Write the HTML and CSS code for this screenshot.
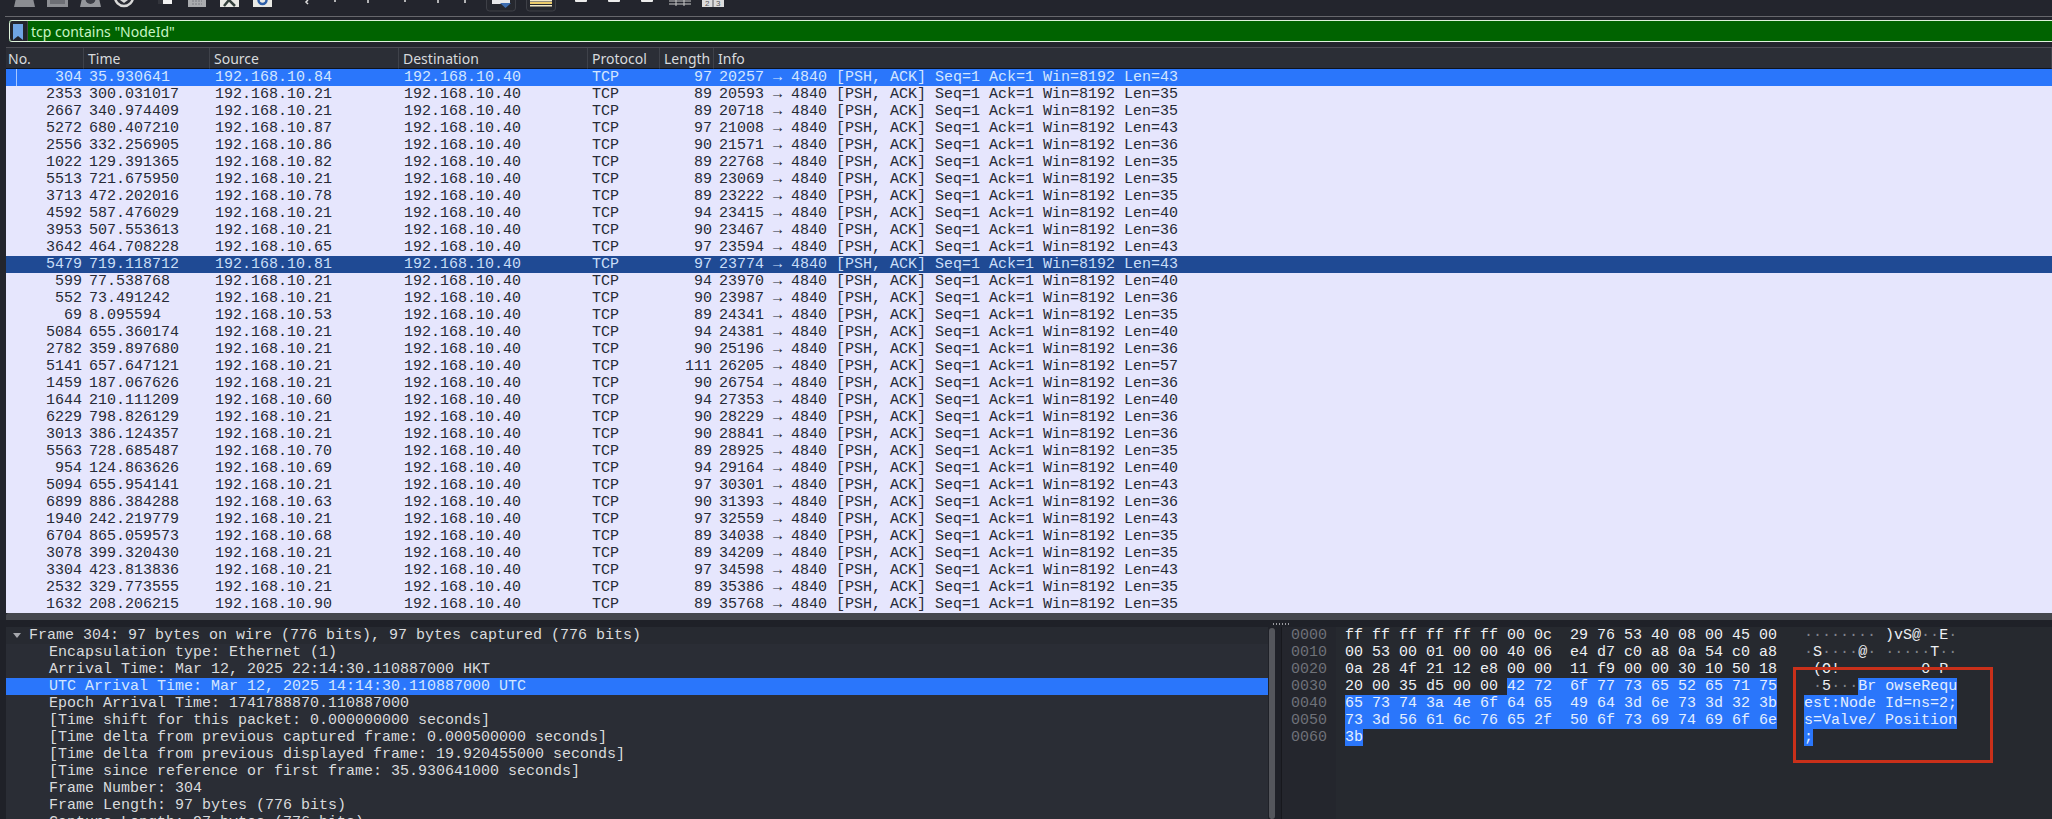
FILE: index.html
```html
<!DOCTYPE html>
<html lang="en">
<head>
    <meta charset="UTF-8">
    <meta name="viewport" content="width=device-width, initial-scale=1.0">
    <title>Wireshark</title>
    <link rel="stylesheet" href="styles.css">
</head>
<body>

    <div class="app">
        <!-- main toolbar, only the lower edge of the icons is in the shot -->
        <div class="toolbar">
            <svg class="toolbar-icons" width="800" height="16" viewBox="0 0 800 16">
                <path d="M17 -6H32L35 7H14Z" fill="#8b8d92"/>
                <rect x="47" y="-8" width="21" height="15" fill="#8d8f94"/>
                <rect x="50" y="-8" width="15" height="12" fill="#6d6f75"/>
                <path d="M83 -6H98L101 7H80Z" fill="#94969b"/>
                <circle cx="90.500" cy="-1" r="5" fill="#3b3d45"/>
                <circle cx="124" cy="-3" r="9" fill="#2b2d35" stroke="#d9d9d9" stroke-width="2.500"/>
                <path d="M120 0H128L124 3Z" fill="#d9d9d9"/>
                <rect x="158" y="-4" width="14" height="8" fill="#f2f2f2"/>
                <rect x="158" y="0" width="5" height="4" fill="#33353c"/>
                <rect x="188" y="-6" width="18" height="13" fill="#a9abae"/>
                <path d="M192 1H202M192 4H202" stroke="#7b7d82" stroke-dasharray="2 1"/>
                <rect x="220" y="-6" width="19" height="13" fill="#e9e9e4"/>
                <path d="M224 6L229 0L235 6" fill="none" stroke="#34403c" stroke-width="2.500"/>
                <rect x="253" y="-6" width="19" height="13" fill="#e9e9e4"/>
                <circle cx="262.500" cy="0" r="4" fill="none" stroke="#2e5fa8" stroke-width="2.500"/>
                <path d="M308 0L306 2L308 4M335 0V2M368 0V3M405 0V2M438 0V3M465 0V3" fill="none" stroke="#e2e2e2" stroke-width="1.500"/>
                <rect x="486.500" y="-6" width="29" height="17" rx="3" fill="#26282f" stroke="#3e4047"/>
                <rect x="492" y="-2" width="18" height="6" fill="#e8e8ea"/>
                <path d="M500 3H511L505.500 8Z" fill="#3e6db0"/>
                <rect x="526.500" y="-6" width="29" height="17" rx="3" fill="#26282f" stroke="#3e4047"/>
                <rect x="530" y="0" width="22" height="1.500" fill="#f3e9c8"/>
                <rect x="530" y="2" width="22" height="2" fill="#eccb6a"/>
                <rect x="530" y="5" width="22" height="1.500" fill="#f3e9c8"/>
                <rect x="575" y="-3" width="12" height="5" rx="1" fill="#ececec"/>
                <rect x="608" y="-3" width="12" height="5" rx="1" fill="#ececec"/>
                <rect x="641" y="-3" width="12" height="5" rx="1" fill="#ececec"/>
                <path d="M669 1H691M669 4H691M676 -2V6M684 -2V6" stroke="#c9c9c9"/>
                <rect x="702" y="-6" width="22" height="13" fill="#dcdcdc"/>
                <path d="M713 -6V7" stroke="#55575d"/>
                <text x="705" y="6" class="tool-digit">2</text>
                <text x="716" y="6" class="tool-digit">3</text>
            </svg>
        </div>

        <!-- display filter -->
        <div class="filter">
            <div class="filter-mark">
                <svg width="10" height="16" viewBox="0 0 10 16">
                    <path d="M0 0H10V16L5 12L0 16Z" fill="#6fa5e4"/>
                </svg>
            </div>
            <span class="filter-text">tcp contains "NodeId"</span>
        </div>

        <!-- packet list -->
        <div class="packets">
            <table class="packet-table">
                <colgroup>
                    <col class="col-no"><col class="col-time"><col class="col-addr"><col class="col-addr"><col class="col-proto"><col class="col-len"><col>
                </colgroup>
                <thead>
                    <tr>
                        <th class="th-no">No.</th><th>Time</th><th>Source</th><th>Destination</th><th>Protocol</th><th>Length</th><th>Info</th>
                    </tr>
                </thead>
                <tbody>
                    <tr class="current"><td class="num first-mark">304</td><td>35.930641</td><td>192.168.10.84</td><td>192.168.10.40</td><td>TCP</td><td class="num">97</td><td>20257 → 4840 [PSH, ACK] Seq=1 Ack=1 Win=8192 Len=43</td></tr>
                    <tr><td class="num">2353</td><td>300.031017</td><td>192.168.10.21</td><td>192.168.10.40</td><td>TCP</td><td class="num">89</td><td>20593 → 4840 [PSH, ACK] Seq=1 Ack=1 Win=8192 Len=35</td></tr>
                    <tr><td class="num">2667</td><td>340.974409</td><td>192.168.10.21</td><td>192.168.10.40</td><td>TCP</td><td class="num">89</td><td>20718 → 4840 [PSH, ACK] Seq=1 Ack=1 Win=8192 Len=35</td></tr>
                    <tr><td class="num">5272</td><td>680.407210</td><td>192.168.10.87</td><td>192.168.10.40</td><td>TCP</td><td class="num">97</td><td>21008 → 4840 [PSH, ACK] Seq=1 Ack=1 Win=8192 Len=43</td></tr>
                    <tr><td class="num">2556</td><td>332.256905</td><td>192.168.10.86</td><td>192.168.10.40</td><td>TCP</td><td class="num">90</td><td>21571 → 4840 [PSH, ACK] Seq=1 Ack=1 Win=8192 Len=36</td></tr>
                    <tr><td class="num">1022</td><td>129.391365</td><td>192.168.10.82</td><td>192.168.10.40</td><td>TCP</td><td class="num">89</td><td>22768 → 4840 [PSH, ACK] Seq=1 Ack=1 Win=8192 Len=35</td></tr>
                    <tr><td class="num">5513</td><td>721.675950</td><td>192.168.10.21</td><td>192.168.10.40</td><td>TCP</td><td class="num">89</td><td>23069 → 4840 [PSH, ACK] Seq=1 Ack=1 Win=8192 Len=35</td></tr>
                    <tr><td class="num">3713</td><td>472.202016</td><td>192.168.10.78</td><td>192.168.10.40</td><td>TCP</td><td class="num">89</td><td>23222 → 4840 [PSH, ACK] Seq=1 Ack=1 Win=8192 Len=35</td></tr>
                    <tr><td class="num">4592</td><td>587.476029</td><td>192.168.10.21</td><td>192.168.10.40</td><td>TCP</td><td class="num">94</td><td>23415 → 4840 [PSH, ACK] Seq=1 Ack=1 Win=8192 Len=40</td></tr>
                    <tr><td class="num">3953</td><td>507.553613</td><td>192.168.10.21</td><td>192.168.10.40</td><td>TCP</td><td class="num">90</td><td>23467 → 4840 [PSH, ACK] Seq=1 Ack=1 Win=8192 Len=36</td></tr>
                    <tr><td class="num">3642</td><td>464.708228</td><td>192.168.10.65</td><td>192.168.10.40</td><td>TCP</td><td class="num">97</td><td>23594 → 4840 [PSH, ACK] Seq=1 Ack=1 Win=8192 Len=43</td></tr>
                    <tr class="marked"><td class="num">5479</td><td>719.118712</td><td>192.168.10.81</td><td>192.168.10.40</td><td>TCP</td><td class="num">97</td><td>23774 → 4840 [PSH, ACK] Seq=1 Ack=1 Win=8192 Len=43</td></tr>
                    <tr><td class="num">599</td><td>77.538768</td><td>192.168.10.21</td><td>192.168.10.40</td><td>TCP</td><td class="num">94</td><td>23970 → 4840 [PSH, ACK] Seq=1 Ack=1 Win=8192 Len=40</td></tr>
                    <tr><td class="num">552</td><td>73.491242</td><td>192.168.10.21</td><td>192.168.10.40</td><td>TCP</td><td class="num">90</td><td>23987 → 4840 [PSH, ACK] Seq=1 Ack=1 Win=8192 Len=36</td></tr>
                    <tr><td class="num">69</td><td>8.095594</td><td>192.168.10.53</td><td>192.168.10.40</td><td>TCP</td><td class="num">89</td><td>24341 → 4840 [PSH, ACK] Seq=1 Ack=1 Win=8192 Len=35</td></tr>
                    <tr><td class="num">5084</td><td>655.360174</td><td>192.168.10.21</td><td>192.168.10.40</td><td>TCP</td><td class="num">94</td><td>24381 → 4840 [PSH, ACK] Seq=1 Ack=1 Win=8192 Len=40</td></tr>
                    <tr><td class="num">2782</td><td>359.897680</td><td>192.168.10.21</td><td>192.168.10.40</td><td>TCP</td><td class="num">90</td><td>25196 → 4840 [PSH, ACK] Seq=1 Ack=1 Win=8192 Len=36</td></tr>
                    <tr><td class="num">5141</td><td>657.647121</td><td>192.168.10.21</td><td>192.168.10.40</td><td>TCP</td><td class="num">111</td><td>26205 → 4840 [PSH, ACK] Seq=1 Ack=1 Win=8192 Len=57</td></tr>
                    <tr><td class="num">1459</td><td>187.067626</td><td>192.168.10.21</td><td>192.168.10.40</td><td>TCP</td><td class="num">90</td><td>26754 → 4840 [PSH, ACK] Seq=1 Ack=1 Win=8192 Len=36</td></tr>
                    <tr><td class="num">1644</td><td>210.111209</td><td>192.168.10.60</td><td>192.168.10.40</td><td>TCP</td><td class="num">94</td><td>27353 → 4840 [PSH, ACK] Seq=1 Ack=1 Win=8192 Len=40</td></tr>
                    <tr><td class="num">6229</td><td>798.826129</td><td>192.168.10.21</td><td>192.168.10.40</td><td>TCP</td><td class="num">90</td><td>28229 → 4840 [PSH, ACK] Seq=1 Ack=1 Win=8192 Len=36</td></tr>
                    <tr><td class="num">3013</td><td>386.124357</td><td>192.168.10.21</td><td>192.168.10.40</td><td>TCP</td><td class="num">90</td><td>28841 → 4840 [PSH, ACK] Seq=1 Ack=1 Win=8192 Len=36</td></tr>
                    <tr><td class="num">5563</td><td>728.685487</td><td>192.168.10.70</td><td>192.168.10.40</td><td>TCP</td><td class="num">89</td><td>28925 → 4840 [PSH, ACK] Seq=1 Ack=1 Win=8192 Len=35</td></tr>
                    <tr><td class="num">954</td><td>124.863626</td><td>192.168.10.69</td><td>192.168.10.40</td><td>TCP</td><td class="num">94</td><td>29164 → 4840 [PSH, ACK] Seq=1 Ack=1 Win=8192 Len=40</td></tr>
                    <tr><td class="num">5094</td><td>655.954141</td><td>192.168.10.21</td><td>192.168.10.40</td><td>TCP</td><td class="num">97</td><td>30301 → 4840 [PSH, ACK] Seq=1 Ack=1 Win=8192 Len=43</td></tr>
                    <tr><td class="num">6899</td><td>886.384288</td><td>192.168.10.63</td><td>192.168.10.40</td><td>TCP</td><td class="num">90</td><td>31393 → 4840 [PSH, ACK] Seq=1 Ack=1 Win=8192 Len=36</td></tr>
                    <tr><td class="num">1940</td><td>242.219779</td><td>192.168.10.21</td><td>192.168.10.40</td><td>TCP</td><td class="num">97</td><td>32559 → 4840 [PSH, ACK] Seq=1 Ack=1 Win=8192 Len=43</td></tr>
                    <tr><td class="num">6704</td><td>865.059573</td><td>192.168.10.68</td><td>192.168.10.40</td><td>TCP</td><td class="num">89</td><td>34038 → 4840 [PSH, ACK] Seq=1 Ack=1 Win=8192 Len=35</td></tr>
                    <tr><td class="num">3078</td><td>399.320430</td><td>192.168.10.21</td><td>192.168.10.40</td><td>TCP</td><td class="num">89</td><td>34209 → 4840 [PSH, ACK] Seq=1 Ack=1 Win=8192 Len=35</td></tr>
                    <tr><td class="num">3304</td><td>423.813836</td><td>192.168.10.21</td><td>192.168.10.40</td><td>TCP</td><td class="num">97</td><td>34598 → 4840 [PSH, ACK] Seq=1 Ack=1 Win=8192 Len=43</td></tr>
                    <tr><td class="num">2532</td><td>329.773555</td><td>192.168.10.21</td><td>192.168.10.40</td><td>TCP</td><td class="num">89</td><td>35386 → 4840 [PSH, ACK] Seq=1 Ack=1 Win=8192 Len=35</td></tr>
                    <tr><td class="num">1632</td><td>208.206215</td><td>192.168.10.90</td><td>192.168.10.40</td><td>TCP</td><td class="num">89</td><td>35768 → 4840 [PSH, ACK] Seq=1 Ack=1 Win=8192 Len=35</td></tr>
                </tbody>
            </table>
            <div class="hscroll"></div>
        </div>

        <div class="splitter"><span class="splitter-grip"></span></div>

        <div class="panes">
            <!-- packet details -->
            <div class="details">
                <div class="tree-row tree-top"><span class="tree-arrow"></span>Frame 304: 97 bytes on wire (776 bits), 97 bytes captured (776 bits)</div>
                <div class="tree-row">Encapsulation type: Ethernet (1)</div>
                <div class="tree-row">Arrival Time: Mar 12, 2025 22:14:30.110887000 HKT</div>
                <div class="tree-row tree-selected">UTC Arrival Time: Mar 12, 2025 14:14:30.110887000 UTC</div>
                <div class="tree-row">Epoch Arrival Time: 1741788870.110887000</div>
                <div class="tree-row">[Time shift for this packet: 0.000000000 seconds]</div>
                <div class="tree-row">[Time delta from previous captured frame: 0.000500000 seconds]</div>
                <div class="tree-row">[Time delta from previous displayed frame: 19.920455000 seconds]</div>
                <div class="tree-row">[Time since reference or first frame: 35.930641000 seconds]</div>
                <div class="tree-row">Frame Number: 304</div>
                <div class="tree-row">Frame Length: 97 bytes (776 bits)</div>
                <div class="tree-row">Capture Length: 97 bytes (776 bits)</div>
            </div>
            <div class="vscroll"><div class="vscroll-thumb"></div></div>

            <!-- packet bytes -->
            <div class="bytes">
                <div class="offsets">
                    <div>0000</div>
                    <div>0010</div>
                    <div>0020</div>
                    <div>0030</div>
                    <div>0040</div>
                    <div>0050</div>
                    <div>0060</div>
                </div>
                <div class="hexdump">
                    <div class="hex-line">ff ff ff ff ff ff 00 0c  29 76 53 40 08 00 45 00   <i>········</i> )vS@<i>··</i>E<i>·</i></div>
                    <div class="hex-line">00 53 00 01 00 00 40 06  e4 d7 c0 a8 0a 54 c0 a8   <i>·</i>S<i>····</i>@<i>·</i> <i>·····</i>T<i>··</i></div>
                    <div class="hex-line">0a 28 4f 21 12 e8 00 00  11 f9 00 00 30 10 50 18   <i>·</i>(O!<i>····</i> <i>····</i>0<i>·</i>P<i>·</i></div>
                    <div class="hex-line">20 00 35 d5 00 00 <b>42 72  6f 77 73 65 52 65 71 75</b>    <i>·</i>5<i>···</i><b>Br owseRequ</b></div>
                    <div class="hex-line"><b>65 73 74 3a 4e 6f 64 65  49 64 3d 6e 73 3d 32 3b</b>   <b>est:Node Id=ns=2;</b></div>
                    <div class="hex-line"><b>73 3d 56 61 6c 76 65 2f  50 6f 73 69 74 69 6f 6e</b>   <b>s=Valve/ Position</b></div>
                    <div class="hex-line"><b>3b</b>                                                 <b>;</b></div>
                </div>
                <div class="callout"></div>
            </div>
        </div>
    </div>

</body>
</html>
```

FILE: styles.css
```css
html, body {
    margin: 0;
    padding: 0;
    background-color: #23252d;
}

.app {
    width: 2052px;
    height: 819px;
    overflow: hidden;
    display: flex;
    flex-direction: column;
}

.toolbar {
    flex: none;
    height: 16px;
    border-bottom: 1px solid #66676c;
    margin-left: 5px;
    overflow: hidden;
}

.toolbar-icons {
    display: block;
    margin-left: -5px;
}

.tool-digit {
    font-family: "Liberation Sans", sans-serif;
    font-size: 8px;
    fill: #555;
}

.filter {
    flex: none;
    height: 22px;
    margin: 3px 0 0 9px;
    box-sizing: border-box;
    display: flex;
    align-items: center;
    background-color: #006300;
    border-top: 1px solid #dff3dc;
    border-bottom: 1px solid #dff3dc;
    border-top-left-radius: 3px;
    border-bottom-left-radius: 3px;
}

.filter-mark {
    width: 19px;
    height: 20px;
    box-sizing: border-box;
    margin-right: 3px;
    padding: 3px 0 0 3px;
    background-color: #23252d;
    border-left: 1px solid #dff3dc;
    border-right: 1px solid #444;
    border-top-left-radius: 3px;
    border-bottom-left-radius: 3px;
}

.filter-mark svg {
    display: block;
}

.filter-text {
    font-family: "Noto Sans", sans-serif;
    font-size: 14px;
    color: #c8f5c4;
}

.packets {
    flex: none;
    margin: 5px 0 0 6px;
    border-top: 1px solid #4d4e55;
}

.packet-table {
    width: 2046px;
    table-layout: fixed;
    border-collapse: separate;
    border-spacing: 0;
    background-color: #e6e6fd;
}

.col-no { width: 78px; }
.col-time { width: 126px; }
.col-addr { width: 189px; }
.col-proto { width: 72px; }
.col-len { width: 54px; }

.packet-table th {
    height: 20px;
    padding: 0 0 0 4px;
    box-sizing: content-box;
    text-align: left;
    font-family: "Noto Sans", sans-serif;
    font-size: 14px;
    font-weight: normal;
    color: #d8dadd;
    background-color: #2b2e36;
    border-right: 1px solid #3f424a;
    border-bottom: 1px solid #0d1420;
}

.packet-table .th-no {
    padding-left: 2px;
}

.packet-table td {
    height: 17px;
    padding: 0 0 0 5px;
    font-family: "Liberation Mono", monospace;
    font-size: 15px;
    line-height: 17px;
    color: #272a36;
    white-space: pre;
    overflow: hidden;
}

.packet-table td:nth-child(5) {
    padding-left: 4px;
}

.packet-table td.num {
    padding: 0 2px 0 0;
    text-align: right;
}

.packet-table .first-mark {
    position: relative;
}

.first-mark::before {
    content: "";
    position: absolute;
    left: 10px;
    top: 0;
    bottom: 0;
    width: 1px;
    background-color: #a9c8ff;
}

.current td {
    background-color: #2a76fb;
    color: #d3e6ff;
}

.marked td {
    background-color: #1f4a94;
    color: #c9def8;
}

.hscroll {
    height: 7px;
    background-color: #45474d;
    border-top-left-radius: 3px;
}

.splitter {
    flex: none;
    height: 7px;
    background-color: #1f2128;
    position: relative;
}

.splitter-grip {
    position: absolute;
    left: 1272px;
    top: 3px;
    width: 18px;
    height: 2px;
    background-image: radial-gradient(circle, #9a9ba0 0.7px, transparent 0.8px);
    background-size: 3px 2px;
}

.panes {
    flex: 1;
    min-height: 0;
    display: flex;
    padding-left: 6px;
    font-family: "Liberation Mono", monospace;
    font-size: 15px;
    line-height: 17px;
    background-color: #1f2128;
}

.details {
    width: 1262px;
    flex: none;
    color: #d9dbdd;
    background-color: #2a2d35;
    overflow: hidden;
}

.tree-row {
    height: 17px;
    padding-left: 43px;
    white-space: pre;
}

.tree-top {
    position: relative;
    padding-left: 23px;
    background-color: #272a31;
}

.tree-arrow {
    position: absolute;
    left: 7px;
    top: 6px;
    border-left: 4px solid transparent;
    border-right: 4px solid transparent;
    border-top: 5px solid #a6a8ad;
}

.tree-selected {
    background-color: #2a76fb;
    color: #d3e6ff;
}

.vscroll {
    flex: none;
    width: 14px;
    padding: 1px 7px 0 1px;
    box-sizing: border-box;
    border-right: 1px solid #17181d;
}

.vscroll-thumb {
    width: 6px;
    height: 191px;
    border-radius: 3px;
    background-color: #54565c;
}

.bytes {
    flex: 1;
    position: relative;
    display: flex;
    background-color: #26292f;
}

.offsets {
    flex: none;
    width: 45px;
    padding-left: 9px;
    color: #6f7279;
    background-color: #24262d;
}

.hexdump {
    padding-left: 9px;
    color: #eef0f3;
}

.hex-line {
    height: 17px;
    white-space: pre;
}

.hexdump i {
    font-style: normal;
    color: #7f8289;
}

.hexdump b {
    font-weight: normal;
    background-color: #2a76fb;
    color: #e3eeff;
}

.callout {
    position: absolute;
    left: 511px;
    top: 40px;
    width: 200px;
    height: 96px;
    box-sizing: border-box;
    border: 3px solid #c9301a;
}
```
